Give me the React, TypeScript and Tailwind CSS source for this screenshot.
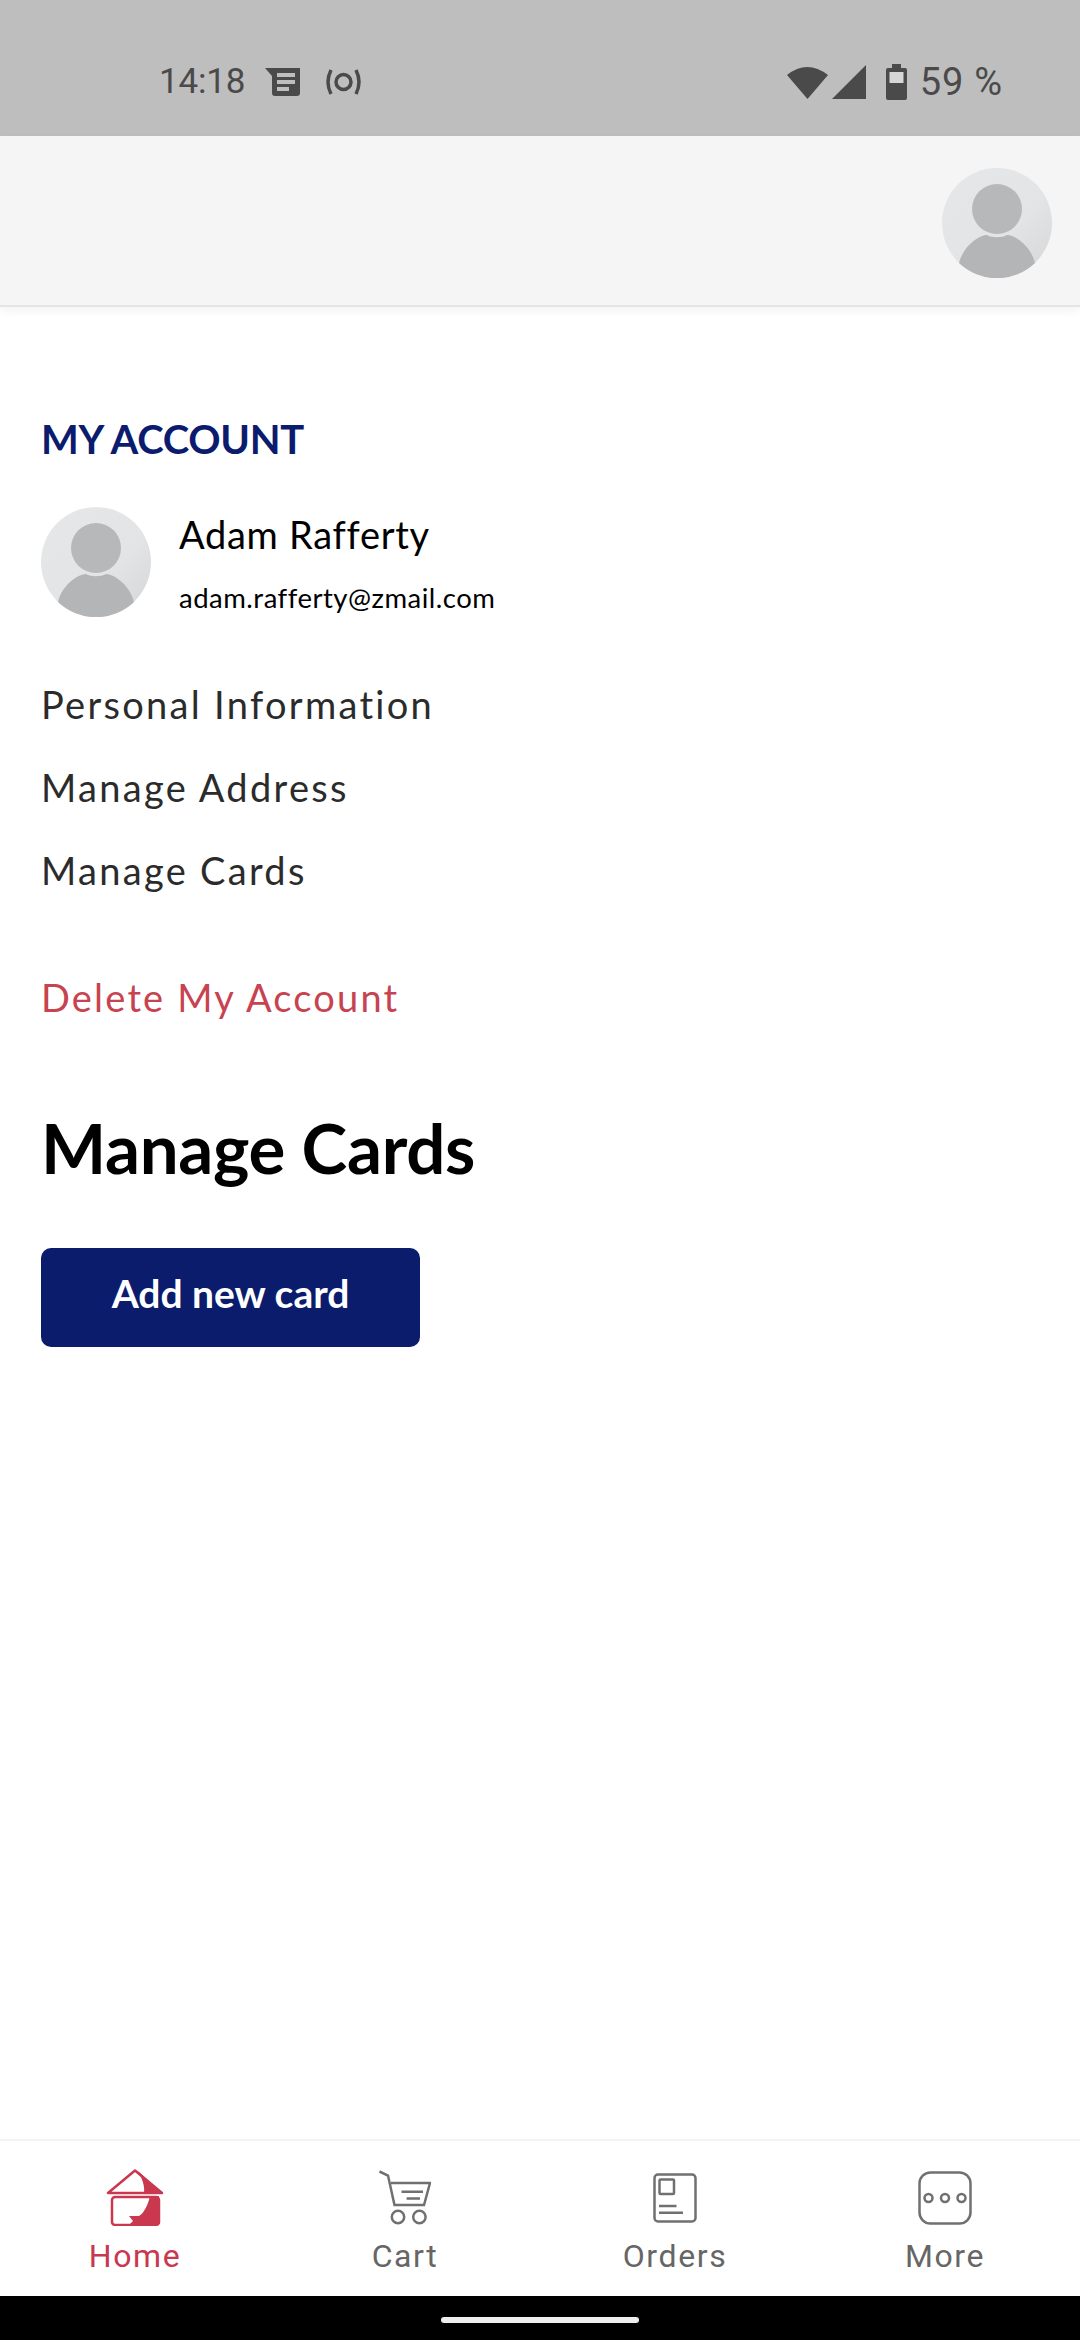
import React from 'react';

function Avatar({ id }: { id: string }) {
  return (
    <svg viewBox="0 0 110 110" className="h-[110px] w-[110px] shrink-0">
      <defs>
        <linearGradient id={id} x1="0" y1="0" x2="1" y2="1">
          <stop offset="0" stopColor="#e6e7e9" />
          <stop offset="0.6" stopColor="#e3e4e6" />
          <stop offset="1" stopColor="#d4d5d7" />
        </linearGradient>
      </defs>
      <circle cx="55" cy="55" r="55" fill={`url(#${id})`} />
      <circle cx="55" cy="41" r="25" fill="#b7b8ba" />
      <path d="M17 95C21 78 37 67 45 67C50 70 60 70 65 67C73 67 89 78 93 95A55 55 0 0 1 17 95Z" fill="#b4b5b7" />
    </svg>
  );
}

function HomeIcon() {
  return (
    <svg viewBox="0 0 58 57" className="h-[57px] w-[58px]" fill="none">
      <path d="M29 1.5L2 24H56Z" stroke="#c9384f" strokeWidth="2.5" strokeLinejoin="round" />
      <path d="M32 2C36 10 39 16 38 24H56Z" fill="#c9384f" />
      <rect x="6" y="28" width="47" height="28" rx="3" stroke="#c9384f" strokeWidth="2.5" />
      <path d="M44 27C42 36 38 44 33 47L23 47L27 52L23 56L50 56Q53 56 53 53L53 27Z" fill="#c9384f" />
    </svg>
  );
}

function CartIcon() {
  return (
    <svg viewBox="0 0 52 55" className="h-[55px] w-[52px]" fill="none" stroke="#707070" strokeWidth="2.5">
      <path d="M0.5 1.5L9 5.5L15.5 35H45L51 13H12" />
      <path d="M22.5 21.7H44M27.6 28.5H41" />
      <circle cx="19" cy="47" r="6.2" />
      <circle cx="40.4" cy="47" r="6.2" />
    </svg>
  );
}

function OrdersIcon() {
  return (
    <svg viewBox="0 0 44 50" className="h-[50px] w-[44px]" fill="none" stroke="#707070" strokeWidth="2.5">
      <rect x="1.5" y="1.5" width="41" height="47" rx="3.5" />
      <rect x="6.5" y="6.5" width="14.5" height="14.5" rx="1" />
      <path d="M6 33H23.5M6 39.7H30" />
    </svg>
  );
}

function MoreIcon() {
  return (
    <svg viewBox="0 0 54 54" className="h-[54px] w-[54px]" fill="none" stroke="#707070" strokeWidth="2.5">
      <rect x="1.5" y="1.5" width="51" height="51" rx="11" />
      <circle cx="10.5" cy="27" r="4" />
      <circle cx="27" cy="27" r="4" />
      <circle cx="43.5" cy="27" r="4" />
    </svg>
  );
}

const menuItems = ['Personal Information', 'Manage Address', 'Manage Cards'];

const navItems = [
  { label: 'Home', icon: <HomeIcon />, active: true },
  { label: 'Cart', icon: <CartIcon />, active: false },
  { label: 'Orders', icon: <OrdersIcon />, active: false },
  { label: 'More', icon: <MoreIcon />, active: false },
];

export default function App() {
  return (
    <div className="flex h-[2340px] w-[1080px] flex-col overflow-hidden bg-white font-['Lato',sans-serif]">
      {/* status bar */}
      <div className="flex h-[136px] shrink-0 items-start justify-between bg-[#bebebe] pl-[159px] pr-[77px] pt-[60px] font-['Roboto',sans-serif] text-[38px] leading-[44px] text-[#4a4a4a]">
        <div className="flex items-center">
          <span className="text-[35px] tracking-[-0.2px]">14:18</span>
          <svg viewBox="0 0 35 28" className="ml-[20px] h-[28px] w-[35px]" fill="#4a4a4a">
            <path d="M0 0H35V25Q35 28 32 28H10Q7 28 7 25V8Z" />
            <path d="M12 5H30V9H12ZM12 12H30V16H12ZM12 19H24V23H12Z" fill="#bebebe" />
          </svg>
          <svg viewBox="0 0 35 28" className="ml-[26px] h-[28px] w-[35px]" fill="none" stroke="#4a4a4a" strokeWidth="3.5">
            <circle cx="17.5" cy="14" r="7.5" />
            <path d="M5 2Q-1 14 5 26M30 2Q36 14 30 26" />
          </svg>
        </div>
        <div className="flex items-center">
          <svg viewBox="0 0 41 34" className="h-[34px] w-[41px]" fill="#4a4a4a">
            <path d="M0 10Q20 -6 41 10L20.5 34Z" />
          </svg>
          <svg viewBox="0 0 34 34" className="ml-[4px] h-[34px] w-[34px]" fill="#4a4a4a">
            <path d="M34 0V34H0Z" />
          </svg>
          <svg viewBox="0 0 21 36" className="ml-[20px] h-[36px] w-[21px]" fill="#4a4a4a">
            <path d="M6 0H15V4H19Q21 4 21 6V34Q21 36 19 36H2Q0 36 0 34V6Q0 4 2 4H6Z" />
            <rect x="3.5" y="8" width="14" height="11" fill="#d6d6d6" />
          </svg>
          <span className="ml-[13px] tracking-[0.8px]">59 %</span>
        </div>
      </div>

      {/* top app bar */}
      <header className="flex h-[171px] shrink-0 justify-end border-b-2 border-[#e4e4e4] bg-[#f5f5f5] pr-[28px] pt-[32px] shadow-[0_4px_10px_rgba(0,0,0,0.05)]">
        <Avatar id="header-avatar" />
      </header>

      {/* account content */}
      <main className="flex-1 px-[41px] pt-[108px]">
        <h2 className="text-[40px] font-bold leading-[48px] tracking-[-0.3px] text-[#0b1c6e]">MY ACCOUNT</h2>
        <div className="mt-[44px] flex">
          <Avatar id="profile-avatar" />
          <div className="ml-[28px] text-black">
            <p className="mt-[4px] text-[38px] leading-[46px] tracking-[0.7px]">Adam Rafferty</p>
            <p className="mt-[24px] text-[27.5px] leading-[34px] tracking-[0.5px]">adam.rafferty@zmail.com</p>
          </div>
        </div>
        <nav className="mt-[65px] flex flex-col gap-[38px]">
          {menuItems.map((item) => (
            <a key={item} className="text-[38px] leading-[45px] tracking-[2.3px] text-[#2b2b2b]">
              {item}
            </a>
          ))}
        </nav>
        <a className="mt-[82px] block text-[38px] leading-[45px] tracking-[2.2px] text-[#c7434f]">Delete My Account</a>
        <h1 className="mt-[88px] text-[69px] font-bold leading-[80px] tracking-[-0.3px] text-black">Manage Cards</h1>
        <button className="mt-[60px] h-[99px] w-[379px] rounded-[10px] bg-[#0b1c6c] pb-[8px] text-[39px] font-bold text-white">
          Add new card
        </button>
      </main>

      {/* bottom nav */}
      <nav className="grid h-[157px] shrink-0 grid-cols-4 border-t-2 border-[#f3f3f3] bg-white pt-[27px] font-['Roboto',sans-serif]">
        {navItems.map((item) => (
          <div key={item.label} className="flex flex-col items-center">
            <div className="flex h-[59px] items-center">{item.icon}</div>
            <span className={`mt-[9px] text-[32px] leading-[40px] tracking-[1.6px] ${item.active ? 'text-[#c9384f]' : 'text-[#666666]'}`}>
              {item.label}
            </span>
          </div>
        ))}
      </nav>

      {/* gesture bar */}
      <div className="flex h-[44px] shrink-0 justify-center bg-black pt-[21px]">
        <div className="h-[6px] w-[198px] rounded-full bg-[#eeeeee]" />
      </div>
    </div>
  );
}
